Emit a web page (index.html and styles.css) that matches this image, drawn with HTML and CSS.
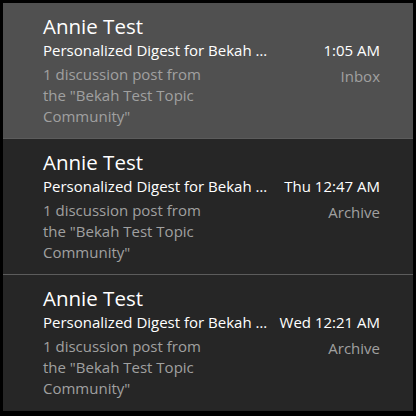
FILE: index.html
```html
<!DOCTYPE html>
<html>
<head>
<meta charset="utf-8">
<link rel="stylesheet" href="styles.css">
</head>
<body>
<div class="list">
  <div class="item selected">
    <div class="name">Annie Test</div>
    <div class="line">
      <span class="subject">Personalized Digest for Bekah …</span>
      <span class="time">1:05 AM</span>
    </div>
    <div class="line">
      <span class="preview">1 discussion post from the "Bekah Test Topic Community"</span>
      <span class="folder">Inbox</span>
    </div>
  </div>
  <div class="item">
    <div class="name">Annie Test</div>
    <div class="line">
      <span class="subject">Personalized Digest for Bekah …</span>
      <span class="time">Thu 12:47 AM</span>
    </div>
    <div class="line">
      <span class="preview">1 discussion post from the "Bekah Test Topic Community"</span>
      <span class="folder">Archive</span>
    </div>
  </div>
  <div class="item">
    <div class="name">Annie Test</div>
    <div class="line">
      <span class="subject">Personalized Digest for Bekah …</span>
      <span class="time">Wed 12:21 AM</span>
    </div>
    <div class="line">
      <span class="preview">1 discussion post from the "Bekah Test Topic Community"</span>
      <span class="folder">Archive</span>
    </div>
  </div>
</div>
</body>
</html>
```
FILE: styles.css
```css
html, body {
  margin: 0;
  background: #000;
}
body {
  padding: 3px;
  width: 410px;
  height: 410px;
  font-family: "Open Sans", "Noto Sans", sans-serif;
}
.list {
  background: #262626;
  height: 408px;
}
.item {
  height: 136px;
  box-sizing: border-box;
  padding: 9px 33px 0 40px;
  border-bottom: 1px solid #5c5c5c;
  background: #262626;
}
.item:last-child {
  border-bottom: none;
}
.item.selected {
  background: #505050;
}
.name {
  color: #ffffff;
  font-size: 20.5px;
  line-height: 28px;
}
.line {
  display: flex;
  align-items: flex-start;
}
.subject {
  flex: 1;
  min-width: 0;
  color: #ffffff;
  font-size: 15px;
  line-height: 21px;
  white-space: nowrap;
  margin-right: 12px;
}
.time {
  color: #ffffff;
  font-size: 15px;
  line-height: 21px;
}
.preview {
  width: 172px;
  color: #a0a0a0;
  font-size: 15px;
  line-height: 21px;
  margin-top: 3px;
}
.folder {
  margin-left: auto;
  color: #a0a0a0;
  font-size: 15px;
  line-height: 21px;
  margin-top: 5px;
}
```
